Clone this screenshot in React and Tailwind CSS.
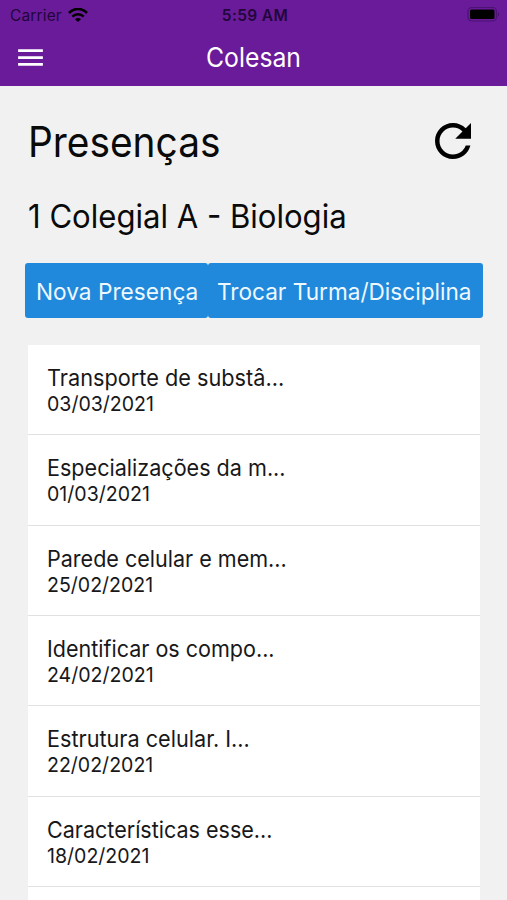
const lessons = [
  { title: 'Transporte de substâ...', date: '03/03/2021', scale: 'scale-x-[0.965]' },
  { title: 'Especializações da m...', date: '01/03/2021', scale: 'scale-x-[0.959]' },
  { title: 'Parede celular e mem...', date: '25/02/2021', scale: 'scale-x-[0.957]' },
  { title: 'Identificar os compo...', date: '24/02/2021', scale: 'scale-x-[0.957]' },
  { title: 'Estrutura celular. I...', date: '22/02/2021', scale: 'scale-x-[0.962]' },
  { title: 'Características esse...', date: '18/02/2021', scale: 'scale-x-[0.957]' },
];

function WifiIcon() {
  return (
    <svg className="ml-[6px] h-[14px] w-[20px]" viewBox="0 0 20 14" fill="none" stroke="currentColor" strokeWidth="2.6">
      <path d="M1 5C6-.4 14-.4 19 5" />
      <path d="M4.3 8.7c3.2-3.2 8.2-3.2 11.4 0" />
      <path d="M10 14 7 11.2c1.7-1.6 4.3-1.6 6 0z" fill="currentColor" stroke="none" />
    </svg>
  );
}

function BatteryIcon() {
  return (
    <svg className="h-[16px] w-[33px]" viewBox="0 0 33 16">
      <rect x="1" y="0.5" width="28.5" height="13.5" rx="4" fill="none" stroke="#4b1272" strokeWidth="1.2" />
      <rect x="3" y="2.5" width="24.5" height="9.5" rx="1.5" fill="#000" />
      <path d="M31 5c1.6.8 1.6 3.8 0 4.6z" fill="#4b1272" />
    </svg>
  );
}

function StatusBar() {
  return (
    <div className="grid h-[30px] grid-cols-3 items-center pl-[10px] pr-[7px] text-[15.5px] leading-none text-[#22063a]">
      <div className="flex items-center">
        <span className="pt-[1px] tracking-[0.15px]">Carrier</span>
        <span className="text-black"><WifiIcon /></span>
      </div>
      <span className="whitespace-nowrap pt-[1px] text-center font-semibold tracking-[0.35px]">5:59 AM</span>
      <div className="flex justify-end"><BatteryIcon /></div>
    </div>
  );
}

export default function App() {
  return (
    <div className="h-[900px] w-[507px] overflow-hidden bg-[#f1f1f1] font-['Inter',sans-serif] text-[#0a0a0a]">
      <header className="h-[86px] bg-[#6a1b9a]">
        <StatusBar />
        <div className="grid h-[54px] grid-cols-[48px_1fr_48px] items-center text-white">
          <svg className="ml-[14px] h-[33px] w-[33px]" viewBox="0 0 24 24" fill="currentColor">
            <path d="M3 18h18v-2H3v2zm0-5h18v-2H3v2zm0-7v2h18V6H3z" />
          </svg>
          <h1 className="scale-x-[0.935] text-center text-[26.5px] leading-none">Colesan</h1>
        </div>
      </header>
      <main className="px-[28px]">
        <div className="flex h-[110px] items-center justify-between">
          <h2 className="origin-left scale-x-[0.925] whitespace-nowrap pt-[2px] text-[42px] leading-none">Presenças</h2>
          <svg className="-mr-[1px] h-[54px] w-[54px]" viewBox="0 0 24 24" fill="#000">
            <path d="M17.65 6.35C16.2 4.9 14.21 4 12 4c-4.42 0-7.99 3.58-7.99 8s3.57 8 7.99 8c3.73 0 6.84-2.55 7.73-6h-2.08c-.82 2.33-3.04 4-5.65 4-3.31 0-6-2.69-6-6s2.69-6 6-6c1.66 0 3.14.69 4.22 1.78L13 11h7V4l-2.35 2.35z" />
          </svg>
        </div>
        <h3 className="h-[67px] origin-left scale-x-[0.942] whitespace-nowrap pt-[4px] text-[33px] leading-[33px]">1 Colegial A - Biologia</h3>
        <div className="-mx-[3px] flex h-[55px] w-[458px] text-[23.5px] text-[#eef8ff]">
          <button className="flex w-[183px] items-center justify-center whitespace-nowrap rounded-[3px] bg-[#2089dc] pl-[2px] pt-[2px]">
            <span className="scale-x-[0.965]">Nova Presença</span>
          </button>
          <button className="flex flex-1 items-center justify-center whitespace-nowrap rounded-[3px] bg-[#2089dc] pr-[2px] pt-[2px]">
            <span className="scale-x-[0.962]">Trocar Turma/Disciplina</span>
          </button>
        </div>
        <ul className="mt-[27px] w-[452px]">
          {lessons.map((l) => (
            <li key={l.date} className="flex h-[90.35px] flex-col border-b-[1.5px] border-[#e1e1e3] bg-white pl-[19px] pt-[19px] text-[#18181a]">
              <span className={`origin-left whitespace-nowrap text-[22.5px] leading-[28px] ${l.scale}`}>{l.title}</span>
              <span className="origin-left scale-x-[0.953] whitespace-nowrap text-[20.5px] leading-[24px]">{l.date}</span>
            </li>
          ))}
          <li className="h-[20px] bg-white" />
        </ul>
      </main>
    </div>
  );
}
